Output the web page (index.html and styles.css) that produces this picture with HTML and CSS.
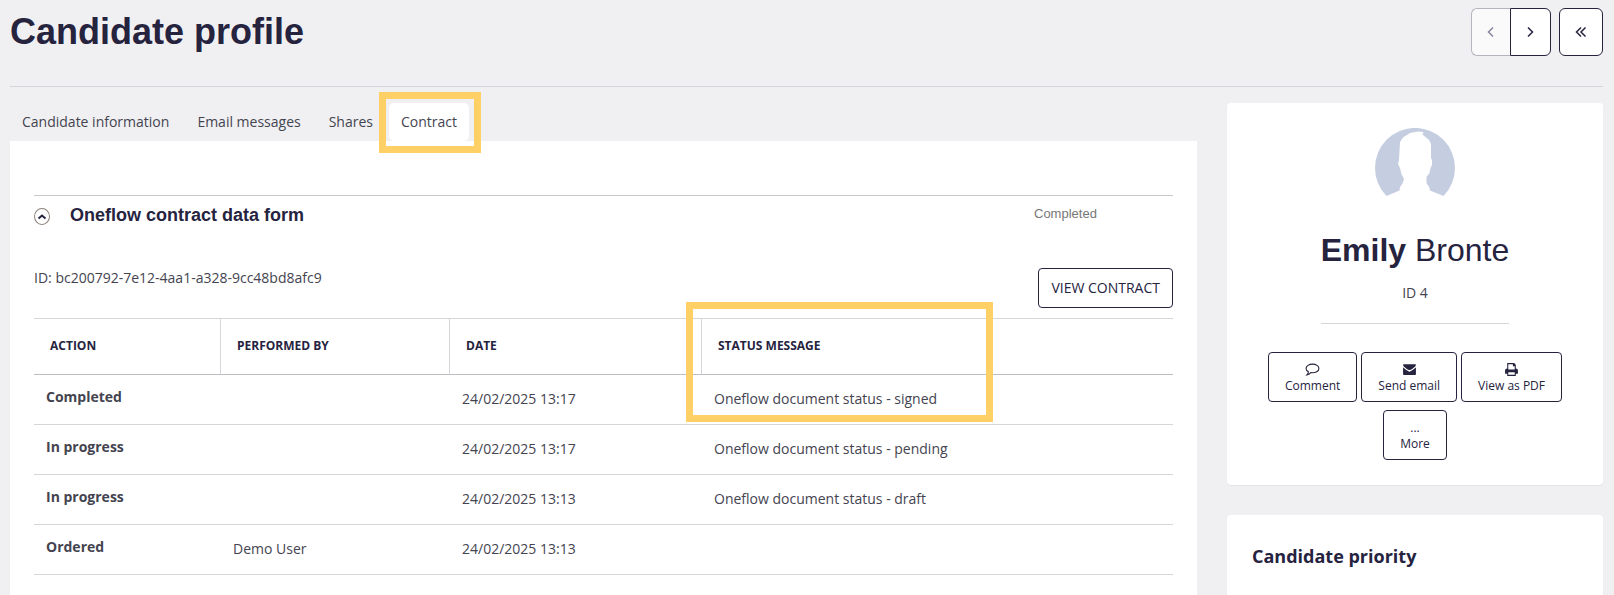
FILE: index.html
```
<!DOCTYPE html>
<html lang="en">
<head>
    <meta charset="UTF-8">
    <meta name="viewport" content="width=device-width, initial-scale=1.0">
    <title>Candidate profile</title>
    <link rel="stylesheet" href="styles.css">
</head>
<body>
    <header class="page-header">
        <h1 class="page-title">Candidate profile</h1>
        <div class="pager">
            <div class="pager-group">
                <button type="button" class="pager-btn prev" aria-label="Previous candidate" disabled>
                    <svg width="14" height="14" viewBox="0 0 14 14"><path d="M9 2.5 4.5 7 9 11.5"/></svg>
                </button>
                <button type="button" class="pager-btn next" aria-label="Next candidate">
                    <svg width="14" height="14" viewBox="0 0 14 14"><path d="M4 2.5 8.5 7 4 11.5"/></svg>
                </button>
            </div>
            <button type="button" class="pager-btn back" aria-label="Back to list">
                <svg width="14" height="14" viewBox="0 0 14 14"><path d="M7 2.5 2.5 7 7 11.5M11.5 2.5 7 7l4.5 4.5"/></svg>
            </button>
        </div>
    </header>

    <div class="layout">
        <main class="main">
            <nav class="tabs">
                <a href="#information" class="tab">Candidate information</a>
                <a href="#messages" class="tab">Email messages</a>
                <a href="#shares" class="tab">Shares</a>
                <a href="#contract" class="tab active">Contract</a>
            </nav>

            <section class="panel" id="contract">
                <div class="form-header">
                    <button type="button" class="toggle" aria-label="Collapse">
                        <svg width="10" height="10" viewBox="0 0 10 10"><path d="M1.5 6.5 5 3.5l3.5 3"/></svg>
                    </button>
                    <h2 class="form-title">Oneflow contract data form</h2>
                    <span class="form-status">Completed</span>
                </div>

                <div class="contract-row">
                    <p class="contract-id">ID: bc200792-7e12-4aa1-a328-9cc48bd8afc9</p>
                    <button type="button" class="view-btn">VIEW CONTRACT</button>
                </div>

                <table class="log">
                    <thead>
                        <tr>
                            <th class="col-action">Action</th>
                            <th class="col-user">Performed by</th>
                            <th class="col-date">Date</th>
                            <th class="col-status">Status message</th>
                        </tr>
                    </thead>
                    <tbody>
                        <tr>
                            <td class="action">Completed</td>
                            <td></td>
                            <td>24/02/2025 13:17</td>
                            <td>Oneflow document status - signed</td>
                        </tr>
                        <tr>
                            <td class="action">In progress</td>
                            <td></td>
                            <td>24/02/2025 13:17</td>
                            <td>Oneflow document status - pending</td>
                        </tr>
                        <tr>
                            <td class="action">In progress</td>
                            <td></td>
                            <td>24/02/2025 13:13</td>
                            <td>Oneflow document status - draft</td>
                        </tr>
                        <tr>
                            <td class="action">Ordered</td>
                            <td>Demo User</td>
                            <td>24/02/2025 13:13</td>
                            <td></td>
                        </tr>
                    </tbody>
                </table>
            </section>
        </main>

        <aside class="sidebar">
            <section class="card profile">
                <svg class="avatar" width="80" height="80" viewBox="0 0 80 80">
                    <path fill="#c5cde0" d="M11.5 68A40 40 0 1 1 68.5 68L55 62.5 54 58.5 51.5 55.5V49L54.5 45 55.5 40 57 37 57 32 56 30V16L54 12 47.500 6.500 48.500 4 43 3.500 35 5 28 9.500 25 14 24 32 23 36 25 40 26.500 46 29 51 27.500 55.500 25 59 24.500 62.500Z"/>
                </svg>
                <div class="profile-info">
                    <h2 class="profile-name"><strong>Emily</strong> Bronte</h2>
                    <p class="profile-id">ID 4</p>
                </div>
                <div class="actions">
                    <button type="button" class="action-btn">
                        <svg width="15" height="13" viewBox="0 0 14 12"><path fill="none" stroke="#26233f" d="M7 1C3.700 1 1 2.700 1 5c0 1.300.8 2.400 2.200 3.100C3.100 9.300 2.600 10.200 1.800 11 3.500 10.700 4.700 9.900 5.500 8.900 10 9.400 13 7.500 13 5c0-2.300-2.700-4-6-4Z"/></svg>
                        Comment
                    </button>
                    <button type="button" class="action-btn">
                        <svg width="15" height="13" viewBox="0 0 14 12"><path fill="#26233f" d="M1.500 1h11c.4 0 .5.300.5.700C13 3 8.500 6.500 7 6.500S1 3 1 1.700C1 1.300 1.100 1 1.500 1ZM1 4c1.500 1.500 4.500 4 6 4s4.500-2.500 6-4v6.500c0 .5-.3.700-.7.700H1.700c-.4 0-.7-.2-.7-.7Z"/></svg>
                        Send email
                    </button>
                    <button type="button" class="action-btn">
                        <svg width="15" height="13" viewBox="0 0 14 12"><path fill="#26233f" fill-rule="evenodd" d="M3 0h6.500L11 1.500V5c1.200 0 2 .8 2 1.800V10h-2v2H3v-2H1V6.800C1 5.800 1.800 5 3 5ZM4 1.200V6h6V3H8.300V1.200ZM4 8.500v2.300h6V8.500Z"/></svg>
                        View as PDF
                    </button>
                    <button type="button" class="action-btn">
                        <span class="dots">...</span>
                        More
                    </button>
                </div>
            </section>

            <section class="card priority">
                <h3 class="card-title">Candidate priority</h3>
            </section>
        </aside>
    </div>
</body>
</html>
```
FILE: styles.css
```
*,
*::after {
    box-sizing: border-box;
}

body {
    display: flex;
    flex-direction: column;
    min-height: 100vh;
    margin: 0;
    padding: 0 11px 0 10px;
    background-color: #f0f0f2;
    color: #444450;
    font-family: "Open Sans", sans-serif;
    font-size: 14px;
    line-height: 20px;
}

h1, h2, h3, p {
    margin: 0;
}

button {
    border: 1px solid #26233f;
    border-radius: 4px;
    background-color: #fff;
    color: #26233f;
    font-family: inherit;
    cursor: pointer;
}

/* Header */
.page-header {
    display: flex;
    justify-content: space-between;
    align-items: flex-start;
    height: 87px;
    padding-top: 8px;
    border-bottom: 1px solid #d5d6da;
}

.page-title {
    color: #26233f;
    font-family: "Liberation Sans", Arial, sans-serif;
    font-size: 36px;
    line-height: 48px;
}

.pager {
    display: flex;
    gap: 8px;
}

.pager-group {
    display: flex;
}

.pager-btn {
    display: flex;
    justify-content: center;
    align-items: center;
    width: 44px;
    height: 48px;
    padding: 0;
    border-radius: 6px;
}

.pager-btn svg,
.toggle svg {
    fill: none;
    stroke: #26233f;
    stroke-width: 2;
}

.pager-btn svg {
    stroke-width: 1.5;
}

.pager-btn.prev {
    width: 39px;
    border-color: #b5b5bf;
    border-right: none;
    border-radius: 6px 0 0 6px;
    background-color: #fafafa;
    cursor: default;
}

.pager-btn.prev svg {
    stroke: #85839a;
}

.pager-btn.next {
    width: 41px;
    border-radius: 0 6px 6px 0;
}

/* Columns */
.layout {
    display: grid;
    grid-template-columns: minmax(0, 1fr) 376px;
    gap: 30px;
    flex: 1;
    padding-top: 16px;
}

.main,
.sidebar {
    display: flex;
    flex-direction: column;
}

.tabs {
    display: flex;
    gap: 4px;
}

.tab {
    position: relative;
    padding: 9px 12px;
    border-radius: 5px;
    color: #444450;
    text-decoration: none;
}

.tab.active {
    background-color: #fff;
}

/* Yellow marker boxes */
.tab.active::after,
.col-status::after {
    content: "";
    position: absolute;
    border: 7px solid #ffd066;
    pointer-events: none;
}

.tab.active::after {
    inset: -11px -12px -12px -10px;
}

.col-status::after {
    top: -17px;
    left: -16px;
    width: 307px;
    height: 120px;
}

.panel {
    flex: 1;
    padding: 54px 24px 19px;
    background-color: #fff;
}

.form-header {
    display: flex;
    align-items: flex-start;
    padding-top: 8px;
    border-top: 1px solid #c8c9cc;
}

.toggle {
    display: flex;
    justify-content: center;
    align-items: center;
    width: 16px;
    height: 17px;
    margin: 4px 20px 0 0;
    padding: 0;
    border-color: #8d8078;
    border-radius: 50%;
}

.form-title {
    flex: 1;
    color: #26233f;
    font-family: "Liberation Sans", Arial, sans-serif;
    font-size: 18px;
    line-height: 22px;
}

.form-status {
    width: 139px;
    color: #777;
    font-family: "Liberation Sans", Arial, sans-serif;
    font-size: 13px;
}

.contract-row {
    display: flex;
    justify-content: space-between;
    align-items: flex-start;
    margin: 42px 0 10px;
}

.view-btn {
    height: 40px;
    padding: 0 12px 1px;
    font-size: 14px;
}

/* Log table */
.log {
    width: 100%;
    border-collapse: separate;
    border-spacing: 0;
    table-layout: fixed;
}

.log th {
    height: 57px;
    padding: 0 16px 2px;
    border-top: 1px solid #d5d6da;
    border-right: 1px solid #d5d6da;
    border-bottom: 1px solid #bcbdc0;
    color: #26233f;
    font-size: 12px;
    text-align: left;
    text-transform: uppercase;
}

.log .col-status {
    position: relative;
    border-right: none;
}

.col-action {
    width: 187px;
}

.col-user {
    width: 229px;
}

.col-date {
    width: 252px;
}

.log td {
    height: 50px;
    padding: 14px 12px 15px;
    border-bottom: 1px solid #d5d6da;
    vertical-align: top;
}

.log td.action {
    padding-top: 12px;
    font-weight: bold;
}

/* Sidebar */
.sidebar {
    gap: 30px;
}

.card {
    padding: 25px;
    border-radius: 4px;
    background-color: #fff;
    box-shadow: 0 1px 1px rgba(0, 0, 0, 0.06);
}

.profile {
    display: flex;
    flex-direction: column;
    align-items: center;
}

.profile-info {
    margin: 22px 0 28px;
    padding-bottom: 20px;
    border-bottom: 1px solid #d5d6da;
    text-align: center;
}

.profile-name {
    color: #26233f;
    font-family: "Liberation Sans", Arial, sans-serif;
    font-size: 32px;
    font-weight: normal;
    line-height: 40px;
}

.profile-id {
    margin-top: 13px;
}

.actions {
    display: flex;
    flex-wrap: wrap;
    justify-content: center;
    gap: 8px 4px;
}

.action-btn {
    display: flex;
    flex-direction: column;
    align-items: center;
    height: 50px;
    padding: 10px 16px 0;
    font-size: 12px;
    line-height: 16px;
}

.action-btn svg {
    margin-bottom: 2px;
}

.dots {
    height: 15px;
    line-height: 14px;
}

.priority {
    flex: 1;
    border-radius: 4px 4px 0 0;
}

.card-title {
    color: #26233f;
    font-size: 18px;
    line-height: 32px;
}
```
